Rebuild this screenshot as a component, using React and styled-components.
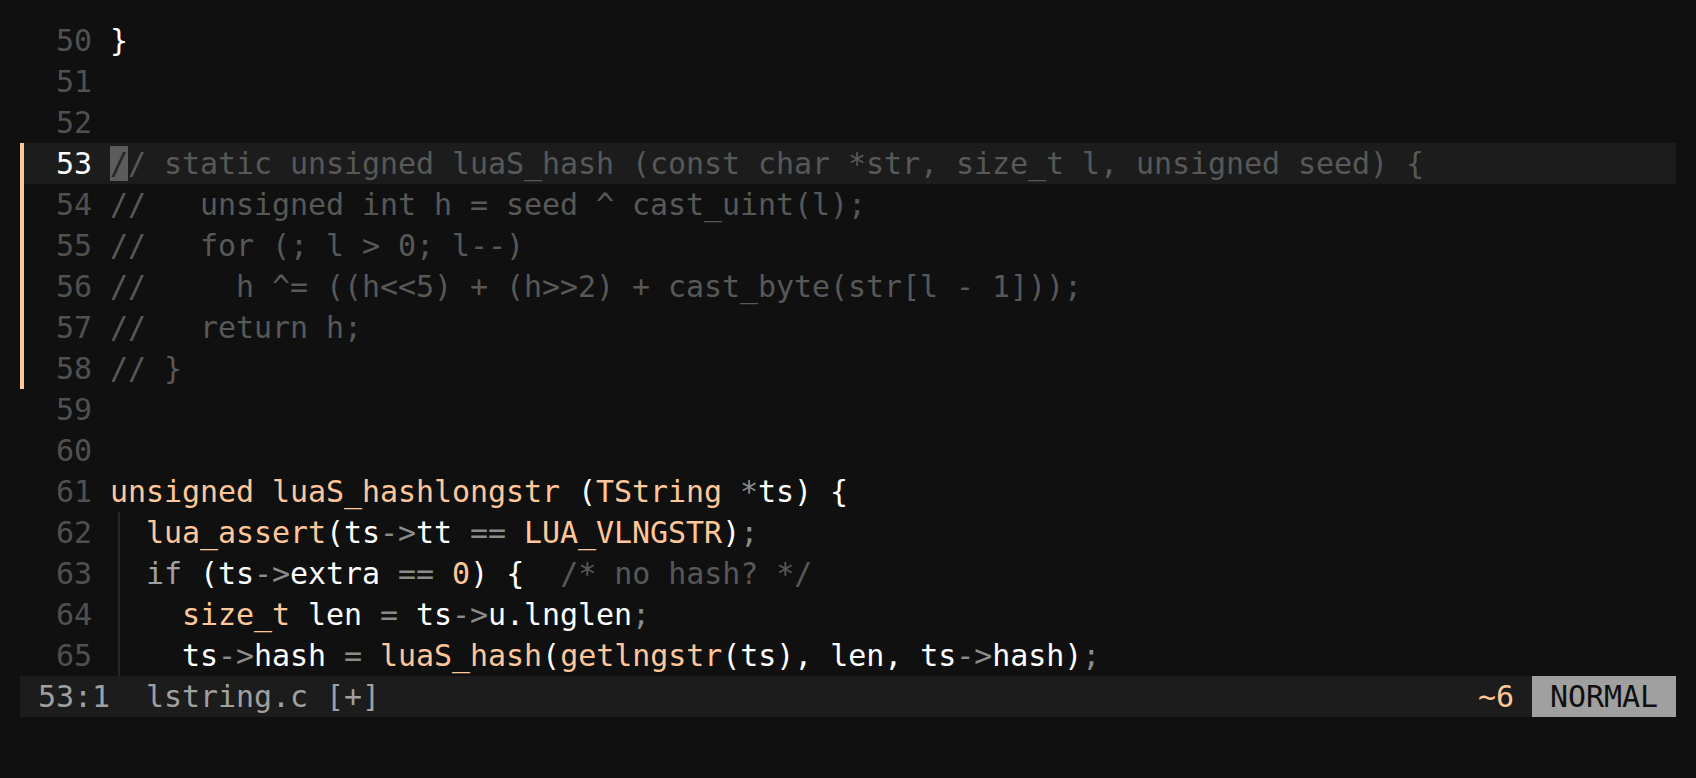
import React from 'react';
import styled, { createGlobalStyle } from 'styled-components';

const GlobalStyle = createGlobalStyle`
  html, body {
    margin: 0;
    padding: 0;
    background: #101010;
  }
`;

const Screen = styled.div`
  box-sizing: border-box;
  width: 1696px;
  height: 778px;
  padding: 20px;
  background: #101010;
  font-family: "DejaVu Sans Mono", "Liberation Mono", monospace;
  font-size: 30px;
  letter-spacing: -0.06px;
  line-height: 41px;
  color: #ffffff;
  display: flex;
  flex-direction: column;
  overflow: hidden;
`;

const Editor = styled.div`
  display: flex;
  flex-direction: column;
`;

const Row = styled.div`
  display: flex;
  height: 41px;
  background: ${p => (p.$current ? '#1c1c1c' : 'transparent')};
`;

const Sign = styled.div`
  width: 18px;
  flex: none;
  box-sizing: border-box;
  border-left: 4px solid ${p => (p.$changed ? '#ffc799' : 'transparent')};
`;

const LineNr = styled.div`
  width: 54px;
  flex: none;
  text-align: right;
  color: ${p => (p.$current ? '#ffffff' : '#505050')};
`;

const Code = styled.div`
  padding-left: 18px;
  white-space: pre;
  flex: 1;
`;

const colors = {
  w: '#ffffff',
  o: '#ffc799',
  g: '#8b8b8b',
  k: '#a0a0a0',
  c: '#585858',
};

const Tok = styled.span`
  color: ${p => colors[p.$kind] || '#ffffff'};
`;

const Cursor = styled.span`
  background: #5c5c5c;
  color: #262626;
`;

const Guide = styled.span`
  display: inline-block;
  width: 18px;
  height: 41px;
  vertical-align: top;
  background: linear-gradient(#262626, #262626) no-repeat 8px 0 / 2px 100%;
`;

const StatusBar = styled.div`
  display: flex;
  height: 41px;
  background: #1c1c1c;
  white-space: pre;
`;

const StatusLeft = styled.div`
  flex: 1;
  color: #a0a0a0;
`;

const Branch = styled.div`
  color: #ffc799;
`;

const Mode = styled.div`
  background: #a0a0a0;
  color: #101010;
`;

const CmdLine = styled.div`
  height: 41px;
`;

const c = text => [[text, 'c']];

const lines = [
  { n: 50, toks: [['}', 'w']] },
  { n: 51, toks: [] },
  { n: 52, toks: [] },
  { n: 53, changed: true, current: true, cursor: true, toks: c('/ static unsigned luaS_hash (const char *str, size_t l, unsigned seed) {') },
  { n: 54, changed: true, toks: c('//   unsigned int h = seed ^ cast_uint(l);') },
  { n: 55, changed: true, toks: c('//   for (; l > 0; l--)') },
  { n: 56, changed: true, toks: c('//     h ^= ((h<<5) + (h>>2) + cast_byte(str[l - 1]));') },
  { n: 57, changed: true, toks: c('//   return h;') },
  { n: 58, changed: true, toks: c('// }') },
  { n: 59, toks: [] },
  { n: 60, toks: [] },
  {
    n: 61,
    toks: [
      ['unsigned luaS_hashlongstr', 'o'], [' (', 'w'], ['TString', 'o'], [' ', 'w'],
      ['*', 'g'], ['ts) {', 'w'],
    ],
  },
  {
    n: 62, guide: true,
    toks: [
      [' ', 'w'], ['lua_assert', 'o'], ['(ts', 'w'], ['->', 'g'], ['tt ', 'w'], ['==', 'g'],
      [' ', 'w'], ['LUA_VLNGSTR', 'o'], [')', 'w'], [';', 'g'],
    ],
  },
  {
    n: 63, guide: true,
    toks: [
      [' ', 'w'], ['if', 'k'], [' (ts', 'w'], ['->', 'g'], ['extra ', 'w'], ['==', 'g'], [' ', 'w'],
      ['0', 'o'], [') {', 'w'], ['  /* no hash? */', 'c'],
    ],
  },
  {
    n: 64, guide: true,
    toks: [
      ['   ', 'w'], ['size_t', 'o'], [' len ', 'w'], ['=', 'g'], [' ts', 'w'], ['->', 'g'],
      ['u.lnglen', 'w'], [';', 'g'],
    ],
  },
  {
    n: 65, guide: true,
    toks: [
      ['   ', 'w'], ['ts', 'w'], ['->', 'g'], ['hash ', 'w'], ['=', 'g'], [' ', 'w'],
      ['luaS_hash', 'o'], ['(', 'w'], ['getlngstr', 'o'], ['(ts), len, ts', 'w'], ['->', 'g'],
      ['hash)', 'w'], [';', 'g'],
    ],
  },
];

export default function App() {
  return (
    <>
      <GlobalStyle />
      <Screen>
        <Editor>
          {lines.map(line => (
            <Row key={line.n} $current={line.current}>
              <Sign $changed={line.changed} />
              <LineNr $current={line.current}>{line.n}</LineNr>
              <Code>
                {line.cursor && <Cursor>/</Cursor>}
                {line.guide && <Guide />}
                {line.toks.map(([text, kind], i) => (
                  <Tok key={i} $kind={kind}>{text}</Tok>
                ))}
              </Code>
            </Row>
          ))}
        </Editor>
        <StatusBar>
          <StatusLeft> 53:1  lstring.c [+]</StatusLeft>
          <Branch>~6 </Branch>
          <Mode> NORMAL </Mode>
        </StatusBar>
        <CmdLine />
      </Screen>
    </>
  );
}
